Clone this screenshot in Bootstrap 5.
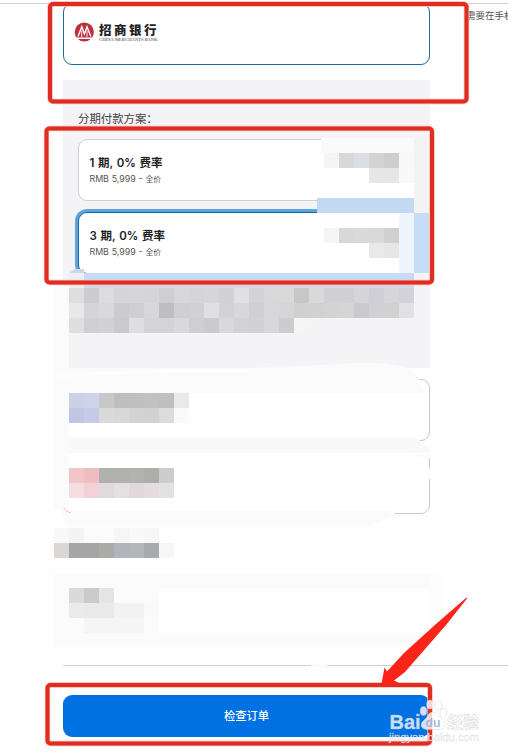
<!DOCTYPE html>
<html lang="zh-CN">
<head>
<meta charset="utf-8">
<meta name="viewport" content="width=device-width, initial-scale=1">
<title>分期付款</title>
<link href="https://cdn.jsdelivr.net/npm/bootstrap@5.3.0/dist/css/bootstrap.min.css" rel="stylesheet">
<style>
body{font-family:Inter,"Noto Sans CJK SC",sans-serif;background:#fefefe;color:#1d1d1f;height:755px;overflow:hidden}
.page-wrap{height:755px;padding-top:3px;overflow:hidden}
.top-rule{height:1px;background:#cfcfcf}
.main-col{width:367px;margin-left:63px;flex:none}
.bank-box{height:62px;margin-top:-1px;border:1px solid #1d6c9c;border-radius:9px;background:#fff;padding:0 0 4px 10px}
.side-note{font-size:9.5px;line-height:14px;color:#555;margin:5px 0 0 36px;white-space:nowrap}
.plan-panel{height:288px;margin-top:15px;background:#f4f4f7;padding:30px 15px 0}
.plan-title{font-size:11.4px;line-height:18px;color:#444;margin-bottom:11px}
.plan-opt{height:62px;border:1px solid #cfd0d4;border-radius:9px;background:#fff;padding:14px 10.5px 0}
.plan-opt.is-on{margin-top:11px;border-color:#12699f;box-shadow:0 0 0 3px #5fa4dc}
.opt-name{font-size:11.5px;line-height:18px;font-weight:600;white-space:nowrap;word-spacing:.8px}
.opt-sub{font-size:8.8px;line-height:14px;color:#555;white-space:nowrap;word-spacing:.4px}
.opt-sub span{font-size:7.8px}
.info-list{margin-top:11px;gap:11px}
.info-box{height:62px;border:1px solid #c9c9cb;border-radius:9px;background:#fff}
.foot-rule{height:1px;background:#cfcfd1;margin:151px 0 29px 63px}
.check-btn{width:367px;height:42px;margin-left:63px;border:0;border-radius:9px;background:#0071e3;color:#fff;font-size:11.3px;font-weight:500}
.overlay{width:508px;height:755px;pointer-events:none}
</style>
<script src="https://cdn.jsdelivr.net/npm/bootstrap@5.3.0/dist/js/bootstrap.bundle.min.js"></script>
</head>
<body class="position-relative">
<div class="page-wrap d-flex flex-column">
  <div class="top-rule flex-shrink-0"></div>
  <div class="d-flex align-items-start">
    <main class="main-col">
      <div class="bank-box d-flex align-items-center">
        <svg width="88" height="28" viewBox="74 18 88 28">
          <circle cx="84.300" cy="32" r="9.600" fill="#bd3040"/>
          <path d="M78 36.500 81.800 26.800 84.400 34 87 26.800 90.800 36.500M76.500 38.200H92.200" fill="none" stroke="#fff" stroke-width="1.400"/>
          <path d="M81.700 30.500V37M87 30.500V37" stroke="#fff" stroke-width=".9"/>
          <text x="99" y="34.700" font-family="Noto Sans CJK SC,sans-serif" font-size="12.500" font-weight="900" textLength="57.500" fill="#27201f">招商银行</text>
          <text x="99" y="41.300" font-family="Liberation Serif,serif" font-size="4.600" font-weight="700" textLength="58.500" lengthAdjust="spacingAndGlyphs" fill="#777">CHINA MERCHANTS BANK</text>
        </svg>
      </div>
      <section class="plan-panel">
        <div class="plan-title">分期付款方案：</div>
        <div class="plan-opt"><div class="opt-name">1 期, 0% 费率</div><div class="opt-sub">RMB 5,999 - <span>全价</span></div></div>
        <div class="plan-opt is-on"><div class="opt-name">3 期, 0% 费率</div><div class="opt-sub">RMB 5,999 - <span>全价</span></div></div>
      </section>
      <div class="info-list d-flex flex-column">
        <div class="info-box"></div>
        <div class="info-box"></div>
      </div>
    </main>
    <div class="side-note">需要在手机</div>
  </div>
  <div class="foot-rule flex-shrink-0"></div>
  <button class="check-btn flex-shrink-0 p-0">检查订单</button>
</div>
<svg class="overlay position-absolute top-0 start-0" viewBox="0 0 508 755">
  <!-- smudged areas -->
  <path d="M54 286H69V368H250Q310 366 350 363Q405 360 418 376L425 393H69V438H54Z" fill="#fbfbfc"/>
  <path d="M54 376Q150 370 250 371" stroke="#fff" stroke-width="3" stroke-opacity=".7" fill="none"/>
  <path d="M62 393H424V438H62Z" fill="#fff"/>
  <path d="M54 378H69V509H54Z" fill="#fbfbfb"/>
  <path d="M69 438H417L429 449V453H69Z" fill="#f9f9fa"/>
  <path d="M69 453H428V480H424V511H69Z" fill="#fff"/>
  <path d="M415 454H431V458H415Z" fill="#fcfcfe"/>
  <path d="M428 468H431V479H428Z" fill="#fdfdfe"/>
  <path d="M62 505H69V511H395V515L365 527H69L62 515Z" fill="#fbfbfb"/>
  <path d="M64 508Q66 512 71 513" stroke="#dfc6cb" fill="none"/>
  <path d="M54 573H430V588H159V633H430V647H54Z" fill="#fbfbfb"/>
  <path d="M430 573H443V633H430Z" fill="#fdfdfd"/>
  <path d="M311 665.500H327" stroke="#fafafa" stroke-width="2"/>
  <!-- mosaic -->
  <path d="M321 138H415V212H321Z" fill="#fff"/>
  <path d="M321 138H415V153H321Z" fill="#fafafa"/>
  <path d="M414 138H430V213H414Z" fill="#f3f3f6"/>
  <path d="M399 213H414V273H399Z" fill="#f0f5fd"/>
  <path d="M317 198H414V213H317Z" fill="#c3d9f1"/>
  <path d="M414 213H429V273H414Z" fill="#c7ddf6"/>
  <path d="M414 273H430V288H414Z" fill="#f4f4f7"/>
  <path d="M69 273H84V288H69Z" fill="#eeeff2"/>
  <path d="M69 273 75 269H84V273Z" fill="#c4d9ee"/>
  <path d="M84 273H414V285H84Z" fill="#c6daf3"/>
  <path d="M84 284H414V288H84Z" fill="#d3d9e8"/>
  <g id="mosaic" shape-rendering="crispEdges"></g>
  <!-- markers -->
  <g fill="none" stroke="#fbb7b1" stroke-width="5.400">
    <rect x="50" y="4" width="416.500" height="97.500" rx="3"/>
    <rect x="46.500" y="128.500" width="385.500" height="154" rx="3"/>
    <rect x="47.500" y="685" width="382.500" height="58.500" rx="3"/>
  </g>
  <g fill="none" stroke="#e02d22" stroke-width="4">
    <rect x="50" y="4" width="416.500" height="97.500" rx="3"/>
    <rect x="46.500" y="128.500" width="385.500" height="154" rx="3"/>
    <rect x="47.500" y="685" width="382.500" height="58.500" rx="3"/>
  </g>
  <path d="M466.500 597.500 467 598.500 446 625 405 672 394 680.500 399 683 381 687 384.500 667.500 387 671.500 404 653 436 624Z" fill="#fb2418"/>
  <!-- watermark -->
  <g fill="#fff" fill-opacity=".8" stroke="#c9ccd2" stroke-opacity=".65" stroke-width=".6">
    <ellipse cx="423.500" cy="711" rx="3.300" ry="4.500"/>
    <ellipse cx="430" cy="704.500" rx="3.400" ry="4.500"/>
    <ellipse cx="438.500" cy="705.500" rx="3.500" ry="4.600"/>
    <ellipse cx="443.500" cy="713" rx="3.500" ry="4.300"/>
    <path d="M433 712Q437 712 440 717.500L444 722Q447 728 440 729.500H426Q419 728 422 722L427 717Q429 712 433 712Z"/>
    <text x="389.500" y="728.500" font-family="Liberation Sans,sans-serif" font-weight="700" font-size="20" textLength="31" lengthAdjust="spacingAndGlyphs">Bai</text>
    <text x="447" y="727.500" font-family="Noto Sans CJK SC,sans-serif" font-weight="700" font-size="16" textLength="32">经验</text>
    <text x="389" y="740.500" font-family="Liberation Sans,sans-serif" font-size="10.500" stroke-width=".4" textLength="90" lengthAdjust="spacingAndGlyphs">jingyan.baidu.com</text>
  </g>
  <text x="425.500" y="726.500" font-family="Liberation Sans,sans-serif" font-weight="700" font-size="12" fill="#8fa9d8" fill-opacity=".8" textLength="15" lengthAdjust="spacingAndGlyphs">du</text>
</svg>
<script>
// each row: left, top, then the colours of consecutive 15px cells
const rows = [
 [324,153,'f5f5f5 d8d8d6 dbdee5 d3d3d4 cecece f8f8f8'],
 [369,168,'e7e7e7 e6e6e6 f9f9f9'],
 [324,228,'f5f5f5 d8d7da dadadb d9d9d9 d0d0d0'],
 [369,243,'e9e9ea e6e6e6'],
 [69,288,'dedee0 cdcccf dcdbde d5d4d7 d6d5d8 d5d5d8 cfced1 d7d7d9 d5d5d8 d6d6d8 d2d2d4 e0e0e3 d3d3d5 d9d9db d9d9da c8c6c6 d9d9dc d0d0d3 d0d0d3 d5d5d7 cfced6 d6d6d9 d3d2d8'],
 [69,303,'e8e8ea d5d5d7 d9d9db ccccce cfcfd2 d8d8da bebec2 cfcfd1 d1d1d3 e0e0e2 d3d3d5 d8d8da d0d0d2 d7d7d9 d6d6d8 cfd0cf d0d1d0 d3d3d3 d4d4d4 cbcbcd d1d1d3 d1d1d2 e1e1e4'],
 [69,318,'dedfe1 d0d0d2 d2d2d4 cacacd dfdfe3 d4d4d7 d4d4d6 d9d9dc cfcfd1 cbcbce d9d9dc d3d3d5 d2d2d4 d7d7d9 cdcdcf f5f5f6'],
 [69,393,'cbd1e6 cdd3e8 c8c8c8 bebebe bfbfbf c1c1c1 bfbfbf e9e9e9'],
 [69,408,'c1c6e2 c5cae5 dadada d8d8d8 d3d3d3 d2d2d2 dcdcdc fafafa'],
 [69,468,'f2c5c9 eebcc1 b0b0af b0b0af b2b2b0 adadac cdcdcc'],
 [69,483,'f6dde0 f2d2d8 dfdadd e2e0e2 e0d8db e4dcdf e3e1e1'],
 [54,528,'f8f8f8 f4f4f4 fbfbfb fbfbfb f6f6f7 f9f9fa f6f6f7'],
 [54,543,'dad7d5 a5a5a5 a5a5a5 acaba8 b2b4bb b5b6bb a9aaac f6f6f6'],
 [69,588,'dadad8 cacacc e4e4e6'],
 [69,603,'ebebeb e9e9ea e9e9ea f2f2f2 f2f2f2 fafafa'],
 [84,618,'f5f5f5 f5f5f5 f5f5f5 f5f5f5 fbfbfb']
];
const g = document.getElementById('mosaic');
rows.forEach(([x, y, list]) => list.split(' ').forEach((c, i) => {
  const r = document.createElementNS('http://www.w3.org/2000/svg', 'rect');
  const a = {x: x + i * 15, y, width: 15, height: 15, fill: '#' + c};
  for (const k in a) r.setAttribute(k, a[k]);
  g.appendChild(r);
}));
</script>
</body>
</html>
